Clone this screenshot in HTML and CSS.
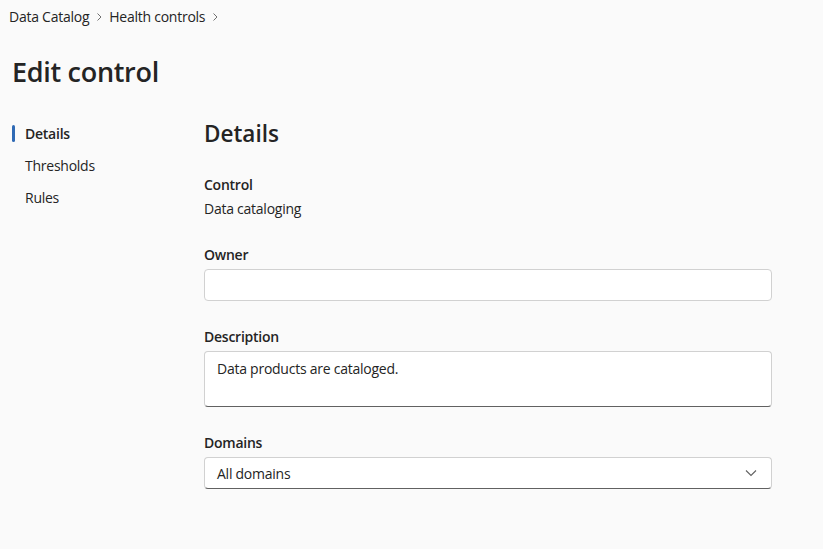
FILE: index.html
```html
<!DOCTYPE html>
<html lang="en">
<head>
<meta charset="utf-8">
<title>Edit control</title>
<link rel="stylesheet" href="styles.css">
</head>
<body>
<div class="page">
  <nav class="breadcrumb">
    <span class="crumb">Data Catalog</span>
    <svg class="sep" width="12" height="12" viewBox="0 0 12 12"><path d="M4.5 2.5 L8 6 L4.5 9.5" fill="none" stroke="#707070" stroke-width="1"/></svg>
    <span class="crumb">Health controls</span>
    <svg class="sep" width="12" height="12" viewBox="0 0 12 12"><path d="M4.5 2.5 L8 6 L4.5 9.5" fill="none" stroke="#707070" stroke-width="1"/></svg>
  </nav>
  <h1 class="title">Edit control</h1>
  <div class="layout">
    <ul class="sidenav">
      <li class="nav-item active">Details</li>
      <li class="nav-item">Thresholds</li>
      <li class="nav-item">Rules</li>
    </ul>
    <main class="content">
      <h2 class="section-title">Details</h2>
      <div class="field">
        <div class="label">Control</div>
        <div class="value">Data cataloging</div>
      </div>
      <div class="field">
        <div class="label">Owner</div>
        <div class="input"></div>
      </div>
      <div class="field">
        <div class="label">Description</div>
        <div class="textarea">Data products are cataloged.</div>
      </div>
      <div class="field">
        <div class="label">Domains</div>
        <div class="select">
          <span>All domains</span>
          <svg width="16" height="16" viewBox="0 0 16 16"><path d="M3 5.5 L8 10.5 L13 5.5" fill="none" stroke="#616161" stroke-width="1.1"/></svg>
        </div>
      </div>
    </main>
  </div>
</div>
</body>
</html>
```

FILE: styles.css
```css
html, body {
  margin: 0;
  padding: 0;
  background: #fafafa;
}
body {
  font-family: "Segoe UI", "Open Sans", "Noto Sans", sans-serif;
  color: #242424;
  font-size: 14px;
  letter-spacing: -0.25px;
}
.page {
  padding: 6px 0 0 0;
  width: 823px;
  height: 549px;
  box-sizing: border-box;
}
.breadcrumb {
  display: flex;
  align-items: center;
  padding-left: 9px;
  height: 22px;
  font-size: 14px;
  line-height: 20px;
}
.sep {
  margin: 0 4px;
}
.title {
  margin: 26px 0 0 12px;
  font-size: 27px;
  font-weight: 600;
  line-height: 36px;
  letter-spacing: -0.3px;
}
.layout {
  display: flex;
  margin-top: 34px;
}
.sidenav {
  list-style: none;
  margin: 0;
  padding: 1px 0 0 12px;
  width: 192px;
}
.nav-item {
  position: relative;
  height: 32px;
  line-height: 18px;
  padding-left: 13px;
}
.nav-item.active {
  font-weight: 600;
}
.nav-item.active::before {
  content: "";
  position: absolute;
  left: 0;
  top: 0;
  width: 3px;
  height: 17px;
  border-radius: 2px;
  background: #2f6ab5;
}
.content {
  width: 568px;
}
.section-title {
  margin: -6px 0 0 0;
  font-size: 22.5px;
  font-weight: 600;
  line-height: 32px;
  letter-spacing: 0;
}
.label {
  font-weight: 600;
  line-height: 20px;
}
.value { line-height: 20px; }
.field:nth-of-type(1) { margin-top: 25px; }
.field:nth-of-type(1) .label { margin-bottom: 4px; }
.field + .field { margin-top: 26px; }
.label + .input, .label + .textarea, .label + .select { margin-top: 4px; }
.input {
  height: 32px;
  box-sizing: border-box;
  background: #fff;
  border: 1px solid #d1d1d1;
  border-radius: 4px;
}
.textarea {
  height: 56px;
  box-sizing: border-box;
  background: #fff;
  border: 1px solid #d1d1d1;
  border-bottom-color: #616161;
  border-radius: 4px;
  padding: 7px 12px;
  line-height: 20px;
}
.select {
  height: 32px;
  box-sizing: border-box;
  background: #fff;
  border: 1px solid #d1d1d1;
  border-bottom-color: #616161;
  border-radius: 4px;
  padding: 0 12px;
  display: flex;
  align-items: center;
  justify-content: space-between;
}
```
